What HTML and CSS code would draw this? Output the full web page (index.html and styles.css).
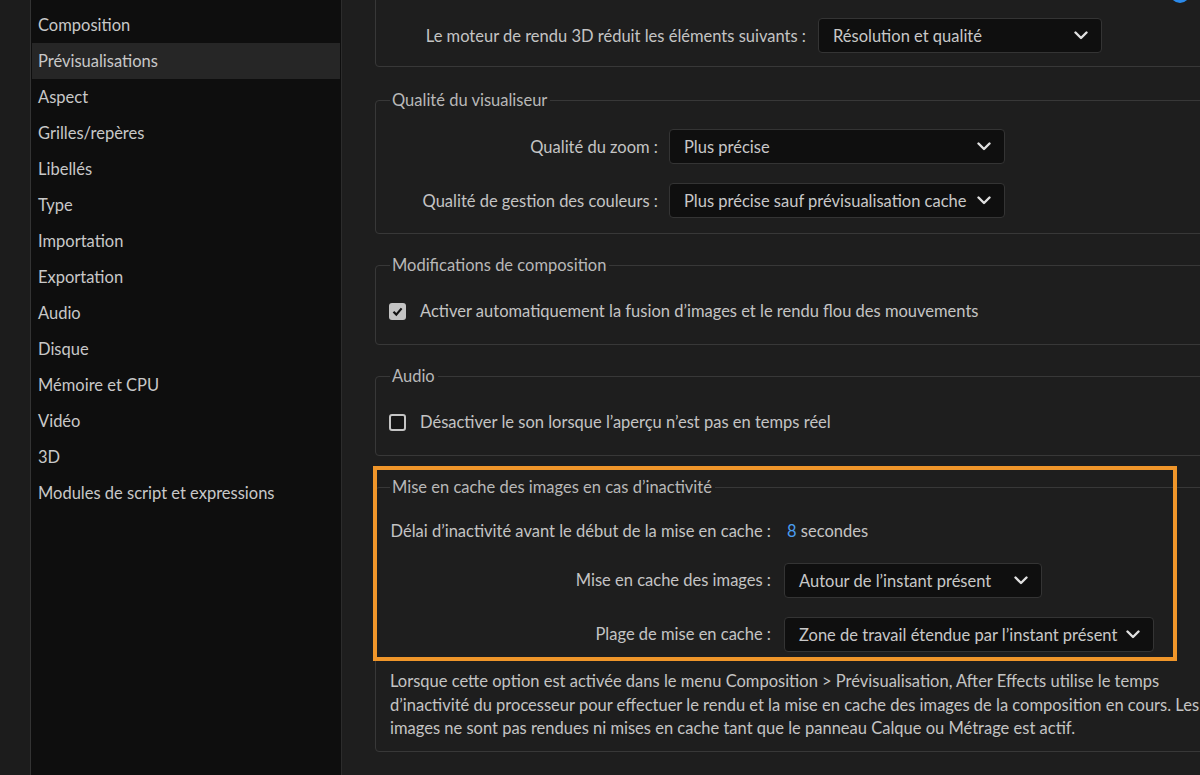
FILE: index.html
```html
<!DOCTYPE html>
<html>
  <head>
    <title>Préférences</title>
    <link rel="stylesheet" href="styles.css">
  </head>
  <body>
    <div class="rail"></div>

    <div class="nav">
      <div class="nav-item">Composition</div>
      <div class="nav-item selected">Prévisualisations</div>
      <div class="nav-item">Aspect</div>
      <div class="nav-item">Grilles/repères</div>
      <div class="nav-item">Libellés</div>
      <div class="nav-item">Type</div>
      <div class="nav-item">Importation</div>
      <div class="nav-item">Exportation</div>
      <div class="nav-item">Audio</div>
      <div class="nav-item">Disque</div>
      <div class="nav-item">Mémoire et CPU</div>
      <div class="nav-item">Vidéo</div>
      <div class="nav-item">3D</div>
      <div class="nav-item">Modules de script et expressions</div>
    </div>

    <div class="main">
      <div class="help"></div>

      <fieldset class="group first">
        <div class="rows rows-3d">
          <span class="label">Le moteur de rendu 3D réduit les éléments suivants :</span>
          <div class="dropdown w284">Résolution et qualité
            <svg class="chev" viewBox="0 0 14 9"><path d="M1.5 1.5 L7 7 L12.5 1.5" /></svg>
          </div>
        </div>
      </fieldset>

      <fieldset class="group viewer">
        <legend>Qualité du visualiseur</legend>
        <div class="rows rows-viewer">
          <span class="label">Qualité du zoom :</span>
          <div class="dropdown w336">Plus précise
            <svg class="chev" viewBox="0 0 14 9"><path d="M1.5 1.5 L7 7 L12.5 1.5" /></svg>
          </div>
          <span class="label">Qualité de gestion des couleurs :</span>
          <div class="dropdown w336">Plus précise sauf prévisualisation cache
            <svg class="chev" viewBox="0 0 14 9"><path d="M1.5 1.5 L7 7 L12.5 1.5" /></svg>
          </div>
        </div>
      </fieldset>

      <fieldset class="group check-group">
        <legend>Modifications de composition</legend>
        <div class="check-row">
          <span class="box checked">
            <svg viewBox="0 0 17 17"><path d="M4.5 8.8 L7.3 11.6 L12.6 5.4" /></svg>
          </span>
          Activer automatiquement la fusion d’images et le rendu flou des mouvements
        </div>
      </fieldset>

      <fieldset class="group check-group">
        <legend>Audio</legend>
        <div class="check-row">
          <span class="box"></span>
          Désactiver le son lorsque l’aperçu n’est pas en temps réel
        </div>
      </fieldset>

      <fieldset class="group cache">
        <legend>Mise en cache des images en cas d’inactivité</legend>
        <div class="rows rows-cache">
          <span class="label">Délai d’inactivité avant le début de la mise en cache :</span>
          <span class="value"><span class="num">8</span> secondes</span>
          <span class="label tall">Mise en cache des images :</span>
          <div class="dropdown w258">Autour de l’instant présent
            <svg class="chev" viewBox="0 0 14 9"><path d="M1.5 1.5 L7 7 L12.5 1.5" /></svg>
          </div>
          <span class="label tall">Plage de mise en cache :</span>
          <div class="dropdown w370">Zone de travail étendue par l’instant présent
            <svg class="chev" viewBox="0 0 14 9"><path d="M1.5 1.5 L7 7 L12.5 1.5" /></svg>
          </div>
        </div>
        <p class="note">Lorsque cette option est activée dans le menu Composition &gt; Prévisualisation, After Effects utilise le temps d’inactivité du processeur pour effectuer le rendu et la mise en cache des images de la composition en cours. Les images ne sont pas rendues ni mises en cache tant que le panneau Calque ou Métrage est actif.</p>
      </fieldset>

      <div class="highlight"></div>
    </div>
  </body>
</html>
```

FILE: styles.css
```css
body{
  margin: 0;
  height: 775px;
  display: flex;
  overflow: hidden;
  background-color: #1e1e1e;
  color: #c4c4c4;
  font-family: Lato, "Noto Sans", sans-serif;
  font-size: 16.5px;
  line-height: 20px;
}

.rail{
  width: 30px;
  flex-shrink: 0;
  background-color: #1c1c1c;
  border-right: 1px solid #333333;
}

.nav{
  width: 311px;
  flex-shrink: 0;
  box-sizing: border-box;
  padding-top: 7px;
  background-color: #0e0e0e;
  border-right: 1px solid #2c2c2c;
}

.nav-item{
  height: 36px;
  line-height: 36px;
  padding-left: 7px;
  margin-right: 1px;
  color: #c8c8c8;
  white-space: nowrap;
}

.nav-item.selected{
  background-color: #262626;
  margin-left: 1px;
  padding-left: 6px;
}

.main{
  flex: 1;
  position: relative;
  overflow: hidden;
  padding-left: 33px;
}

.help{
  position: absolute;
  left: 828px;
  top: -17px;
  width: 20px;
  height: 20px;
  border-radius: 50%;
  background-color: #2b8aea;
}

.group{
  margin: 0 -30px 0 0;
  padding: 0 0 0 14px;
  border: 1px solid #383838;
  border-radius: 4px;
  min-width: 0;
}

.group legend{
  padding: 0 3px 0 2px;
  color: #b8b8b8;
  line-height: 20px;
}

.first{
  margin-top: -20px;
  padding-top: 37px;
  padding-bottom: 13px;
}

.viewer{
  margin-top: 23px;
  padding-top: 19px;
  padding-bottom: 15px;
}

.check-group{
  margin-top: 21px;
  padding-top: 26px;
  padding-bottom: 23px;
}

.cache{
  margin-top: 21px;
  padding-top: 24px;
  padding-bottom: 10px;
}

.rows{
  display: grid;
  align-items: center;
}

.rows .label{
  justify-self: end;
  white-space: nowrap;
}

.rows-3d{
  grid-template-columns: 416px auto;
  column-gap: 12px;
}

.rows-viewer{
  grid-template-columns: 268px auto;
  column-gap: 11px;
  row-gap: 19px;
}

.rows-cache{
  grid-template-columns: 381px auto;
  grid-template-rows: 20px 57px 54px;
  column-gap: 13px;
  align-items: end;
}

.rows-cache .tall{
  line-height: 35px;
}

.value{
  padding-left: 3px;
}

.num{
  color: #4a9df0;
}

.dropdown{
  box-sizing: border-box;
  height: 35px;
  display: flex;
  align-items: center;
  justify-content: space-between;
  padding: 0 13px 0 14px;
  background-color: #0f0f0f;
  border: 1px solid #343434;
  border-radius: 4px;
  color: #c8c8c8;
  white-space: nowrap;
}

.w284{ width: 284px; }
.w336{ width: 336px; }
.w258{ width: 258px; }
.w370{ width: 370px; }

.chev{
  width: 14px;
  height: 9px;
  flex-shrink: 0;
}

.chev path{
  fill: none;
  stroke: #e0e0e0;
  stroke-width: 2.4;
  stroke-linecap: round;
  stroke-linejoin: round;
}

.check-row{
  display: flex;
  align-items: center;
  gap: 14px;
  height: 20px;
  margin-left: -1px;
}

.box{
  width: 17px;
  height: 17px;
  box-sizing: border-box;
  border: 2px solid #c4c4c4;
  border-radius: 3px;
  background-color: #151515;
  flex-shrink: 0;
}

.box.checked{
  background-color: #c4c4c4;
  border: none;
}

.box svg{
  width: 17px;
  height: 17px;
  display: block;
}

.box path{
  fill: none;
  stroke: #141414;
  stroke-width: 2.2;
}

.note{
  margin: 18px 0 0 0;
  line-height: 23.5px;
  color: #c4c4c4;
}

.highlight{
  position: absolute;
  left: 31px;
  top: 466px;
  width: 804px;
  height: 195px;
  box-sizing: border-box;
  border: 4px solid #f0962a;
  pointer-events: none;
}
```
